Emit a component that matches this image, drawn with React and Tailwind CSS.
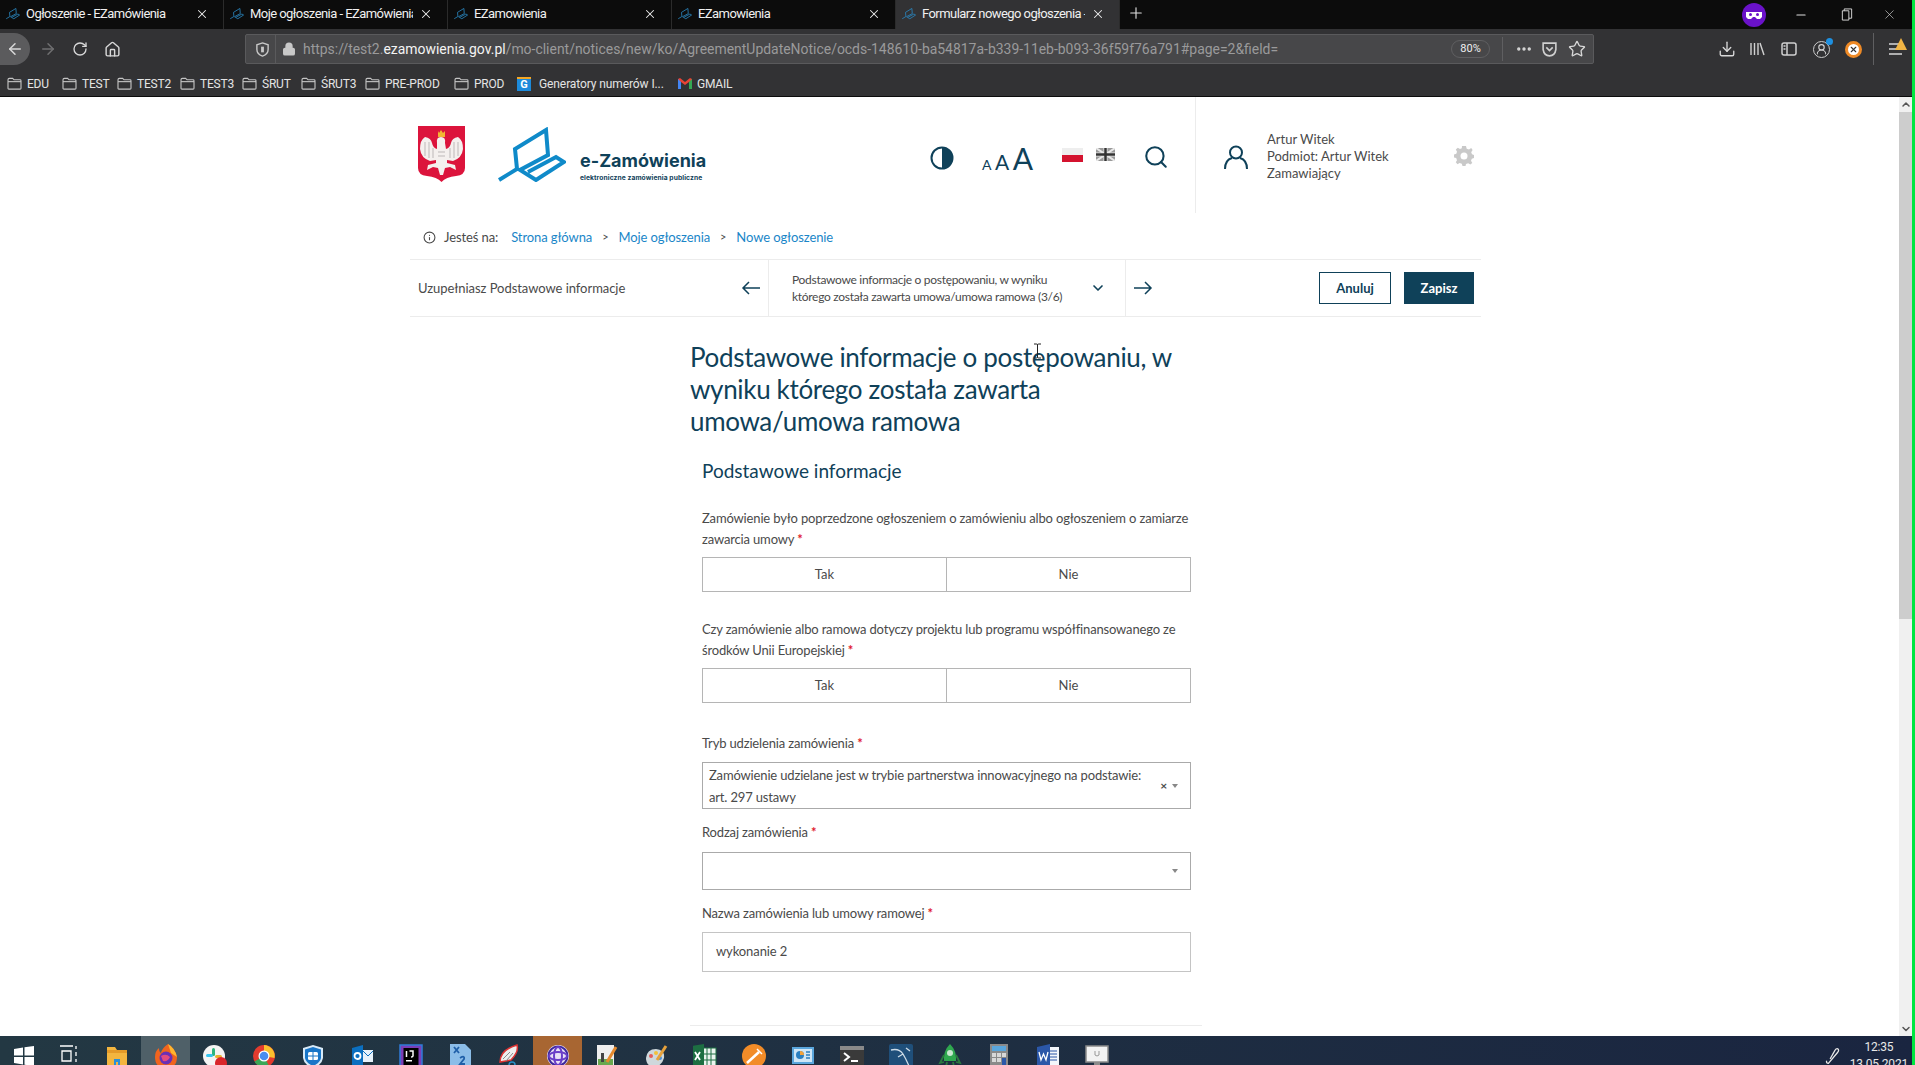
import {
    ArrowLeft, ArrowRight, RotateCw, Home, Lock, Star, Download, Minus, Plus, X, Search,
    UserRound, ChevronDown, ChevronUp, Info, Ellipsis
} from "lucide-react";

const tabs = [
    {title: "Ogłoszenie - EZamówienia"},
    {title: "Moje ogłoszenia - EZamówienia"},
    {title: "EZamowienia"},
    {title: "EZamowienia"},
    {title: "Formularz nowego ogłoszenia -", active: true},
];

const bookmarks = [
    {name: "EDU", w: "w-[55px]"},
    {name: "TEST", w: "w-[55px]"},
    {name: "TEST2", w: "w-[63px]"},
    {name: "TEST3", w: "w-[62px]"},
    {name: "ŚRUT", w: "w-[59px]"},
    {name: "ŚRUT3", w: "w-[64px]"},
    {name: "PRE-PROD", w: "w-[89px]"},
    {name: "PROD", w: "w-[63px]"},
];

const LogoMark = ({className, color = "#0f8ac9"}) => (
    <svg viewBox="0 0 68 55" className={className} fill="none" stroke={color} strokeWidth="4" strokeLinejoin="miter">
        <path d="M1 53 L19 42 L17 22 L48 3 L50 28 L22 43 L38 53 L66 35 L58 30 L30 45" />
    </svg>
);

const Emblem = () => (
    <svg viewBox="0 0 47 56" className="w-[47px] h-[56px]">
        <path d="M0 0 H47 V42 Q47 49 38 50 Q28 51 23.500 56 Q19 51 9 50 Q0 49 0 42 Z" fill="#dc143c" />
        <path d="M23 11 Q18 11 19 17 L19 23 Q15 22 14 17 Q13 12 7 11 Q2 14 2 23 Q3 32 12 35 L18 34 L18 37 L10 39 L9 44 L15 41 L20 42 L22 49 L25 49 L27 42 L32 41 L38 44 L37 39 L29 37 L29 34 L35 35 Q44 32 45 23 Q45 14 40 11 Q34 12 33 17 Q32 22 28 23 L27 17 Q28 11 23 11 Z" fill="#f4f0ee" />
        <path d="M20 5 L21 7 L23 4 L25 7 L27 5 L27 11 L20 11 Z" fill="#f2b632" />
        <path d="M7 16 V30 M11 16 V32 M15 22 V32 M40 16 V30 M36 16 V32 M32 22 V32 M20 26 H27 M20 30 H27" stroke="#bdb8b8" strokeWidth="1" />
    </svg>
);

const FolderIcon = () => (
    <svg viewBox="0 0 16 14" className="w-[15px] h-[13px]" fill="none" stroke="#c4c4c4" strokeWidth="1.200">
        <path d="M1 3 Q1 1.500 2.500 1.500 H6 L7.500 3 H14 Q15 3 15 4 V12 Q15 13 14 13 H2 Q1 13 1 12 Z" />
        <path d="M1 5 H15" />
    </svg>
);

const LineArrow = ({dir}) => (
    <svg viewBox="0 0 20 14" className="h-[14px] w-[20px]" fill="none" stroke="#0f4159" strokeWidth="1.500">
        {dir === "left" ? <path d="M19 7 H2 M8 1 L2 7 L8 13" /> : <path d="M1 7 H18 M12 1 L18 7 L12 13" />}
    </svg>
);

const taskIcons = [
    <svg viewBox="0 0 24 24"><path d="M2 5 L11 3.500 V11.500 H2 Z M12.500 3.300 L22 2 V11.500 H12.500 Z M2 13 H11 V20.500 L2 19 Z M12.500 13 H22 V22 L12.500 20.700 Z" fill="#fff" /></svg>,
    <svg viewBox="0 0 24 24" fill="none" stroke="#fff" strokeWidth="1.300"><path d="M4 2 H17 M4 22 H17 M6 7 H15 V17 H6 Z M20 2 V5 M20 8 V12 M20 15 V18" /></svg>,
    <svg viewBox="0 0 24 24"><path d="M2 3 H10 L12 6 H22 V22 H2 Z" fill="#f3b53f" /><path d="M2 6 H22 V9 H2 Z" fill="#e49a28" /><path d="M9 15 H15 V22 H13 V18 H11 V22 H9 Z" fill="#2b8fd6" /></svg>,
    <svg viewBox="0 0 24 24"><path d="M14 0 Q21 4 23 13 Q23 24 12 24 Q1 24 1 13 Q1 7 5 4 Q5 8 7 9 Q8 4 14 0 Z" fill="#f0641e" /><path d="M14 0 Q21 4 23 13 L17 9 Z" fill="#ffb52e" /><circle cx="12" cy="14" r="6.500" fill="#6a2fb5" /><path d="M7 12 Q12 9 16 13 Q14 18 9 17 Z" fill="#e24a7e" /></svg>,
    <svg viewBox="0 0 24 24"><circle cx="11" cy="12" r="11" fill="#f4f4f4" /><rect x="9" y="4" width="3" height="8" rx="1.500" fill="#2eb67d" /><rect x="3" y="10" width="7" height="3" rx="1.500" fill="#36c5f0" /><rect x="12" y="11" width="7" height="3" rx="1.500" fill="#ecb22e" /><circle cx="18" cy="19" r="6" fill="#d9252a" /></svg>,
    <svg viewBox="0 0 24 24"><circle cx="12" cy="12" r="11" fill="#e33b2e" /><path d="M12 12 L2.500 17.500 A11 11 0 0 0 17 22 Z" fill="#3aa757" /><path d="M12 1 A11 11 0 0 1 22.500 14 L12 12 Z" fill="#fbc02d" /><circle cx="12" cy="12" r="5.500" fill="#fff" /><circle cx="12" cy="12" r="4.300" fill="#4a8df0" /></svg>,
    <svg viewBox="0 0 24 24"><path d="M12 1 L22 4 V14 Q21 21 12 24 Q3 21 2 14 V4 Z" fill="#d8eaf7" /><path d="M12 3 L20 5.500 V14 Q19 19 12 22 Q5 19 4 14 V5.500 Z" fill="#1976c8" /><rect x="7" y="8" width="10" height="8" rx="1.500" fill="#fff" /><path d="M12 8 V16 M7 12 H17" stroke="#1976c8" /></svg>,
    <svg viewBox="0 0 24 24"><path d="M2 4 L13 1 V24 L2 21 Z" fill="#0b6fc0" /><rect x="13" y="6" width="10" height="12" fill="#e8f2fb" /><path d="M13 7 L18 12 L23 7" stroke="#0b6fc0" fill="none" /><circle cx="7.500" cy="12" r="3" fill="none" stroke="#fff" strokeWidth="1.800" /></svg>,
    <svg viewBox="0 0 24 24"><rect x="1" y="1" width="22" height="23" fill="#7b3db5" /><rect x="1" y="1" width="22" height="23" fill="none" stroke="#2f7bd8" strokeWidth="1.500" /><rect x="4.500" y="4" width="15" height="17" fill="#000" /><rect x="7" y="16" width="6" height="1.500" fill="#fff" /><path d="M7.500 7 V13 M10.500 7 H14 V12 Q14 13 12 13" stroke="#fff" strokeWidth="1.500" fill="none" /></svg>,
    <svg viewBox="0 0 24 24"><path d="M2 0 H17 L23 6 V24 H2 Z" fill="#8bbde8" /><path d="M6 3 L11 9 M11 3 L6 9 M12 14 Q17 11 16 15 L12 20 H17" stroke="#1f5fa8" strokeWidth="1.800" fill="none" /></svg>,
    <svg viewBox="0 0 24 24"><path d="M3 18 Q3 6 20 1 Q22 8 14 16 Z" fill="#eee" stroke="#d33" strokeWidth="1.500" /><path d="M6 15 L13 8 M9 17 L16 9" stroke="#888" /><circle cx="15" cy="21" r="3" fill="none" stroke="#2a8fc7" strokeWidth="1.500" /></svg>,
    <svg viewBox="0 0 24 24"><circle cx="12" cy="12" r="11" fill="#e8e0f5" /><circle cx="12" cy="12" r="9.500" fill="none" stroke="#3f2a9c" strokeWidth="2" /><ellipse cx="12" cy="12" rx="4" ry="9" fill="none" stroke="#6a3fc8" strokeWidth="2" /><ellipse cx="12" cy="12" rx="9" ry="4" fill="none" stroke="#6a3fc8" strokeWidth="2" /></svg>,
    <svg viewBox="0 0 24 24"><rect x="2" y="1" width="17" height="23" fill="#eee" /><rect x="3" y="15" width="15" height="9" fill="#6aa84f" /><rect x="6" y="9" width="3" height="9" fill="#444" /><path d="M12 18 L21 3" stroke="#e58a2e" strokeWidth="3" /></svg>,
    <svg viewBox="0 0 24 24"><path d="M2 14 Q3 5 12 5 Q21 6 20 14 Q18 22 10 23 Q2 22 2 14 Z" fill="#cfd8dc" /><circle cx="7" cy="12" r="2" fill="#e35d5b" /><circle cx="12" cy="9" r="2" fill="#f3c13a" /><circle cx="16" cy="14" r="2" fill="#4a90d9" /><path d="M13 16 L22 2" stroke="#e6a13c" strokeWidth="3" /></svg>,
    <svg viewBox="0 0 24 24"><rect x="10" y="4" width="13" height="18" fill="#eaf4ee" stroke="#1d6f42" /><path d="M14 4 V22 M18 4 V22 M10 10 H23 M10 16 H23" stroke="#1d6f42" /><path d="M-1 2 L11 0 V24 L-1 22 Z" fill="#1d6f42" /><path d="M2 8 L7 16 M7 8 L2 16" stroke="#fff" strokeWidth="1.800" /></svg>,
    <svg viewBox="0 0 24 24"><circle cx="12" cy="12" r="12" fill="#f28c28" /><path d="M5 19 L17 8" stroke="#fff" strokeWidth="2.500" /><path d="M15 5 L20 10" stroke="#fff" strokeWidth="1.500" /></svg>,
    <svg viewBox="0 0 24 24"><rect x="1" y="3" width="22" height="17" fill="#5aa6dc" /><rect x="3" y="5" width="18" height="13" fill="#cfe6f6" /><circle cx="9" cy="11" r="4" fill="#2b7fc0" /><path d="M9 7 A4 4 0 0 1 13 11 H9 Z" fill="#f3a23a" /><path d="M15 8 H19 M15 11 H19 M15 14 H19" stroke="#2b7fc0" strokeWidth="1.500" /></svg>,
    <svg viewBox="0 0 24 24"><rect x="0" y="2" width="24" height="20" fill="#3a3a3a" /><rect x="0" y="2" width="24" height="4" fill="#8a8a8a" /><path d="M4 9 L9 13 L4 17" stroke="#fff" strokeWidth="2" fill="none" /><path d="M11 17 H18" stroke="#fff" strokeWidth="2" /></svg>,
    <svg viewBox="0 0 24 24"><rect x="0" y="0" width="24" height="24" rx="2" fill="#1f4f7a" /><path d="M2 6 Q10 4 14 10 Q17 15 20 22 M14 10 L9 13 M17 4 L21 7" stroke="#cfdde8" strokeWidth="1.300" fill="none" /></svg>,
    <svg viewBox="0 0 24 24"><path d="M12 0 Q19 7 18 17 H6 Q5 7 12 0 Z" fill="#2fa84f" /><circle cx="12" cy="9" r="3" fill="#c9e8d0" /><path d="M6 11 L2 19 L6 18 M18 11 L22 19 L18 18 M9 18 L8 23 M15 18 L16 23" stroke="#2a7a3f" strokeWidth="1.800" fill="none" /></svg>,
    <svg viewBox="0 0 24 24"><rect x="3" y="0" width="18" height="24" fill="#8a8a8a" /><rect x="5" y="2" width="14" height="5" fill="#5aa6dc" /><path d="M5 9 H9 V13 H5 Z M10 9 H14 V13 H10 Z M15 9 H19 V13 H15 Z M5 14 H9 V18 H5 Z M10 14 H14 V18 H10 Z" fill="#d8d8d8" /><rect x="15" y="14" width="4" height="9" fill="#2b57a8" /></svg>,
    <svg viewBox="0 0 24 24"><rect x="9" y="3" width="14" height="18" fill="#f3f6fb" /><path d="M14 7 H21 M14 10 H21 M14 13 H21 M14 16 H21" stroke="#2b57a8" /><path d="M1 3 L14 0 V24 L1 21 Z" fill="#2b57a8" /><path d="M3 8 L5 16 L7.500 10 L10 16 L12 8" stroke="#fff" strokeWidth="1.300" fill="none" /></svg>,
    <svg viewBox="0 0 24 24"><rect x="1" y="2" width="22" height="16" fill="#f2f2f2" stroke="#8a8a8a" strokeWidth="1.500" /><path d="M10 7 V11 Q12 13 14 11 V7" stroke="#999" fill="none" /><rect x="9" y="18" width="6" height="3" fill="#8a8a8a" /><rect x="6" y="21" width="12" height="3" fill="#8a8a8a" /></svg>,
];

const Tab = ({title, active}) => (
    <div className={`relative flex w-[224px] shrink-0 items-center pb-[2px] pl-[6px] pr-[14px] h-full border-r border-[#2b2b2b] ${active ? "bg-[#323234]" : ""}`}>
        <LogoMark className="w-[14px] h-[13px] mr-[6px] shrink-0" color="#2a86c0" />
        <span className="flex-1 overflow-hidden whitespace-nowrap text-[13px] text-[#f0f0f0] tracking-[-0.55px]">{title}</span>
        <X className="ml-[6px] shrink-0 text-[#eeeeee]" size={14} strokeWidth={1.800} />
    </div>
);

const BrowserChrome = () => (
    <div className="shrink-0 font-[Roboto,sans-serif]">
        <div className="flex h-[29px] items-center bg-[#0c0c0c]">
            {tabs.map(tab => <Tab key={tab.title} title={tab.title} active={tab.active} />)}
            <Plus className="ml-[7px] mb-[3px] text-[#e0e0e0]" size={18} strokeWidth={1.500} />
            <div className="ml-auto flex items-center">
                <svg viewBox="0 0 24 24" className="h-[24px] w-[24px]">
                    <circle cx="12" cy="12" r="12" fill="#6a12c9" />
                    <path d="M4 9 H20 V14 L18 16 H15 L13 14 H11 L9 16 H6 L4 14 Z" fill="#ffffff" />
                    <circle cx="8.500" cy="11.500" r="1.500" fill="#6a12c9" />
                    <circle cx="15.500" cy="11.500" r="1.500" fill="#6a12c9" />
                </svg>
                <Minus className="ml-[28px] text-[#dddddd]" size={14} />
                <svg viewBox="0 0 12 14" className="ml-[33px] h-[13px] w-[12px]" fill="none" stroke="#dddddd"><path d="M1 3 H8 V13 H1 Z M3 3 V1 H11 V11 H8" /></svg>
                <X className="ml-[29px] mr-[15px] text-[#dddddd]" size={15} strokeWidth={1} />
            </div>
        </div>
        <div className="flex h-[39px] items-center bg-[#323234] pt-[1px] text-[#d8d8d8]">
            <div className="flex h-[32px] w-[30px] items-center justify-center rounded-r-full bg-[#5b5b5d]">
                <ArrowLeft size={18} strokeWidth={2} />
            </div>
            <ArrowRight className="ml-[9px] text-[#6f6f70]" size={18} strokeWidth={2} />
            <RotateCw className="ml-[15px]" size={16} strokeWidth={2} />
            <Home className="ml-[16px]" size={17} strokeWidth={2} />
            <div className="ml-[124px] flex h-[30px] w-[1349px] items-center rounded-[2px] border border-[#5a5a5c] bg-[#474749] pl-[9px]">
                <svg viewBox="0 0 16 16" className="h-[15px] w-[15px]" fill="none" stroke="#c8c8c8" strokeWidth="1.500"><path d="M8 1 L14 3 V8 Q14 13 8 15 Q2 13 2 8 V3 Z" /><path d="M8 5 V11" strokeWidth="3" /></svg>
                <div className="ml-[5px] h-[28px] w-px bg-[#5a5a5c]" />
                <Lock className="ml-[6px] fill-[#c8c8c8] text-[#c8c8c8]" size={14} strokeWidth={2.500} />
                <div className="ml-[7px] w-[981px] shrink-0 overflow-hidden whitespace-nowrap text-[13.950px] text-[#9a9a9b]">
                    https://test2.<span className="text-[#f4f4f4]">ezamowienia.gov.pl</span>/mo-client/notices/new/ko/AgreementUpdateNotice/ocds-148610-ba54817a-b339-11eb-b093-36f59f76a791#page=2&field=
                </div>
                <div className="ml-[167px] flex h-[18px] w-[39px] items-center justify-center rounded-full border border-[#5f5f61] text-[11px] text-[#eeeeee]">80%</div>
                <div className="ml-[12px] h-[24px] w-px bg-[#5f5f61]" />
                <Ellipsis className="ml-[12px]" size={18} strokeWidth={2.500} />
                <svg viewBox="0 0 16 16" className="ml-[8px] h-[17px] w-[17px]" fill="none" stroke="#d0d0d0" strokeWidth="1.500"><path d="M2 2 H14 V8 Q13 14 8 14 Q3 14 2 8 Z" /><path d="M5 6 L8 9 L11 6" /></svg>
                <Star className="ml-[10px]" size={18} strokeWidth={1.800} />
            </div>
            <Download className="ml-[124px]" size={18} strokeWidth={1.800} />
            <svg viewBox="0 0 16 16" className="ml-[13px] h-[16px] w-[16px]" fill="none" stroke="#d0d0d0" strokeWidth="1.400"><path d="M2 2 V14 M5.500 2 V14 M9 2 V14 M11 2 L15 14" /></svg>
            <svg viewBox="0 0 16 16" className="ml-[16px] h-[16px] w-[16px]" fill="none" stroke="#d0d0d0" strokeWidth="1.500"><rect x="1" y="2" width="14" height="12" rx="2" /><path d="M6 2 V14" /><path d="M2.500 5 H4.500 M2.500 8 H4.500" /></svg>
            <div className="relative ml-[16px]">
                <UserRound className="rounded-full border border-[#cccccc] p-[1px]" size={17} strokeWidth={2} />
                <div className="absolute -right-[3px] -top-[3px] h-[7px] w-[7px] rounded-full bg-[#1e90e0]" />
            </div>
            <div className="ml-[15px] flex h-[17px] w-[17px] items-center justify-center rounded-full border-[3px] border-[#ee8a26] bg-white">
                <X className="text-[#333333]" size={9} strokeWidth={3} />
            </div>
            <div className="ml-[11px] h-[32px] w-px bg-[#5f5f61]" />
            <div className="relative ml-[15px]">
                <svg viewBox="0 0 14 14" className="h-[14px] w-[14px]" stroke="#d8d8d8" strokeWidth="1.600"><path d="M0 2 H13 M0 7 H13 M0 12 H13" /></svg>
                <svg viewBox="0 0 12 12" className="absolute -right-[4px] -top-[4px] h-[12px] w-[12px]"><path d="M6 0 L12 12 H0 Z" fill="#f2b544" /></svg>
            </div>
        </div>
        <div className="flex h-[29px] items-center border-b border-[#0c0c0c] bg-[#323234] pt-[3px] pl-[7px] text-[12px] tracking-[-0.2px] text-[#e4e4e4]">
            {bookmarks.map(b => (
                <div className={`flex items-center gap-[5px] ${b.w}`} key={b.name}><FolderIcon /> {b.name}</div>
            ))}
            <div className="flex h-[14px] w-[14px] items-center justify-center bg-[#1c8adb] text-[11px] font-bold leading-none text-white border-t-2 border-[#f5a623]">G</div>
            <span className="ml-[8px] w-[139px] tracking-[-0.1px]">Generatory numerów I...</span>
            <svg viewBox="0 0 14 11" className="h-[11px] w-[14px]"><path d="M0 1 V11 H3 V4 L7 7 L11 4 V11 H14 V1 L12 0 L7 4 L2 0 Z" fill="#ea4335" /><path d="M0 1 V11 H3 V4 Z" fill="#4285f4" /><path d="M14 1 V11 H11 V4 Z" fill="#34a853" /></svg>
            <span className="ml-[5px]">GMAIL</span>
        </div>
    </div>
);

const Header = () => (
    <div className="flex h-[116px]">
        <div className="flex w-[785px] items-start pl-[8px]">
            <div className="mt-[29px]"><Emblem /></div>
            <LogoMark className="ml-[33px] mt-[30px] h-[55px] w-[68px]" />
            <div className="ml-[14px] mt-[52px] flex flex-col text-[#0f4159]">
                <span className="font-[Inter,sans-serif] text-[18px] font-bold leading-[24px]">e-Zamówienia</span>
                <span className="font-[Inter,sans-serif] text-[6.700px] font-bold leading-[9px] mt-[1px] tracking-[0.1px]">elektroniczne zamówienia publiczne</span>
            </div>
            <div className="ml-auto mr-[26px] mt-[46px] flex items-center text-[#0f4159]">
                <svg viewBox="0 0 24 24" className="h-[24px] w-[24px]"><circle cx="12" cy="12" r="10.500" fill="none" stroke="#0f4159" strokeWidth="2" /><path d="M12 1.500 A10.500 10.500 0 0 1 12 22.500 Z" fill="#0f4159" /></svg>
                <div className="ml-[28px] flex w-[51px] items-baseline justify-between leading-none">
                    <span className="text-[14px]">A</span><span className="text-[21px]">A</span><span className="text-[30px]">A</span>
                </div>
                <div className="ml-[29px] mb-[6px] flex h-[14px] w-[21px] flex-col">
                    <div className="flex-1 bg-[#eeeeee]" />
                    <div className="flex-1 bg-[#d4132f]" />
                </div>
                <svg viewBox="0 0 19 13" className="ml-[13px] mb-[7px] h-[13px] w-[19px]">
                    <rect width="19" height="13" fill="#9a9a9a" />
                    <path d="M0 0 L19 13 M19 0 L0 13" stroke="#e8e8e8" strokeWidth="2" />
                    <path d="M9.500 0 V13 M0 6.500 H19" stroke="#e8e8e8" strokeWidth="4" />
                    <path d="M9.500 0 V13 M0 6.500 H19" stroke="#333333" strokeWidth="2.500" />
                </svg>
                <Search className="ml-[28px] mb-[2px]" size={26} strokeWidth={1.900} />
            </div>
        </div>
        <div className="flex flex-1 items-start border-l border-[#ececec] pl-[28px]">
            <svg viewBox="0 0 24 24" className="mt-[48px] h-[24px] w-[24px]" fill="none" stroke="#0f4159" strokeWidth="2">
                <circle cx="12" cy="7.500" r="6" />
                <path d="M1 24 Q1 15 8 13 M23 24 Q23 15 16 13" />
            </svg>
            <div className="ml-[19px] mt-[34px] text-[13px] leading-[17px] text-[#4a4a4a]">
                <div>Artur Witek</div>
                <div>Podmiot: Artur Witek</div>
                <div>Zamawiający</div>
            </div>
            <svg viewBox="0 0 20 20" className="ml-auto mr-[7px] mt-[49px] h-[20px] w-[20px]">
                <path d="M8 0 H12 L12.700 2.700 L15 3.600 L17.200 2 L18.600 4 L17.200 6.200 L18 8.300 L20 9 V12 L17.800 12.700 L17 14.800 L18.300 17 L16.300 18.500 L14.200 17.300 L12 18 L11.500 20 H8.500 L7.800 17.800 L5.600 17 L3.500 18.300 L1.800 16.300 L3 14.200 L2.200 12 L0 11.500 V8.500 L2.300 7.800 L3 5.700 L1.800 3.500 L3.800 1.800 L6 3 L7.800 2.300 Z" fill="#c9c9c9" />
                <circle cx="10" cy="10" r="3.500" fill="#ffffff" />
            </svg>
        </div>
    </div>
);

const Breadcrumb = () => (
    <div className="flex h-[46px] items-center pt-[3px] pl-[13px] text-[13px] tracking-[-0.1px] text-[#4a4a4a]">
        <Info size={13} strokeWidth={2} />
        <span className="ml-[8px]">Jesteś na:</span>
        <span className="ml-[13px] text-[#1a86c8]">Strona główna</span>
        <span className="mx-[10px] text-[11px]">&gt;</span>
        <span className="text-[#1a86c8]">Moje ogłoszenia</span>
        <span className="mx-[10px] text-[11px]">&gt;</span>
        <span className="text-[#1a86c8]">Nowe ogłoszenie</span>
    </div>
);

const NavBar = () => (
    <div className="flex h-[58px] border-y border-[#ececec] text-[#4a4a4a]">
        <div className="flex w-[358px] items-center pl-[8px] pr-[7px] text-[13px] tracking-[-0.05px]">
            <span className="pt-[1px]">Uzupełniasz Podstawowe informacje</span>
            <div className="ml-auto flex"><LineArrow dir="left" /></div>
        </div>
        <div className="flex w-[358px] items-center border-x border-[#ececec] pl-[23px] pr-[19px] text-[12px] leading-[17px] tracking-[-0.3px]">
            <div className="w-[275px]">Podstawowe informacje o postępowaniu, w wyniku którego została zawarta umowa/umowa ramowa (3/6)</div>
            <ChevronDown className="ml-auto text-[#0f4159]" size={16} strokeWidth={2.500} />
        </div>
        <div className="flex flex-1 items-center pl-[7px] pr-[7px]">
            <LineArrow dir="right" />
            <button className="ml-auto h-[32px] w-[72px] border border-[#0f4159] pt-[1px] text-[13px] font-bold text-[#0f4159]">Anuluj</button>
            <button className="ml-[13px] h-[32px] w-[70px] bg-[#0f4159] pt-[1px] text-[13px] font-bold text-white">Zapisz</button>
        </div>
    </div>
);

const Label = ({text}) => (
    <div className="text-[13px] leading-[21px] tracking-[-0.16px] text-[#4a4a4a]">
        {text} <span className="font-bold text-[#e0182d]">*</span>
    </div>
);

const YesNo = () => (
    <div className="mt-[7px] flex h-[35px] border border-[#b5b5b5] text-[13px] text-[#4a4a4a]">
        <div className="flex flex-1 items-center justify-center border-r border-[#b5b5b5]">Tak</div>
        <div className="flex flex-1 items-center justify-center">Nie</div>
    </div>
);

const Caret = () => <div className="h-0 w-0 border-x-[3px] border-t-[4px] border-x-transparent border-t-[#888888]" />;

const Form = () => (
    <div className="ml-[280px] w-[512px]">
        <h1 className="mt-[24px] text-[26px] font-normal leading-[32px] tracking-[-0.33px] text-[#0f4159]">
            Podstawowe informacje o postępowaniu, w wyniku którego została zawarta umowa/umowa ramowa
        </h1>
        <div className="ml-[12px] w-[489px]">
            <h2 className="mt-[21px] text-[19px] leading-[26px] text-[#0f4159]">Podstawowe informacje</h2>
            <div className="mt-[24px]">
                <Label text="Zamówienie było poprzedzone ogłoszeniem o zamówieniu albo ogłoszeniem o zamiarze zawarcia umowy" />
                <YesNo />
            </div>
            <div className="mt-[27px]">
                <Label text="Czy zamówienie albo ramowa dotyczy projektu lub programu współfinansowanego ze środków Unii Europejskiej" />
                <YesNo />
            </div>
            <div className="mt-[30px]"><Label text="Tryb udzielenia zamówienia" /></div>
            <div className="mt-[8px] flex h-[47px] items-center border border-[#aaaaaa] pl-[6px] pr-[12px] text-[13px] leading-[22px] tracking-[-0.16px] text-[#4a4a4a]">
                <div className="w-[445px]">Zamówienie udzielane jest w trybie partnerstwa innowacyjnego na podstawie: art. 297 ustawy</div>
                <span className="ml-auto text-[12px] font-bold leading-none">×</span>
                <div className="ml-[5px]"><Caret /></div>
            </div>
            <div className="mt-[13px]"><Label text="Rodzaj zamówienia" /></div>
            <div className="mt-[9px] flex h-[38px] items-center justify-end border border-[#aaaaaa] pr-[12px]"><Caret /></div>
            <div className="mt-[13px]"><Label text="Nazwa zamówienia lub umowy ramowej" /></div>
            <div className="mt-[8px] flex h-[40px] items-center border border-[#c4c4c4] pl-[13px] text-[13px] tracking-[-0.1px] text-[#4a4a4a]">wykonanie 2</div>
        </div>
        <div className="mt-[53px] h-px bg-[#ececec]" />
    </div>
);

const Scrollbar = () => (
    <div className="flex w-[13px] shrink-0 flex-col items-center bg-[#f0f0f0]">
        <ChevronUp className="h-[15px] shrink-0 text-[#555555]" size={12} strokeWidth={3} />
        <div className="h-[507px] w-full bg-[#cdcdcd]" />
        <ChevronDown className="mt-auto mb-[1px] text-[#555555]" size={12} strokeWidth={3} />
    </div>
);

const Taskbar = () => (
    <div className="relative flex h-[29px] shrink-0 overflow-hidden bg-linear-to-r from-[#233843] to-[#1a2540] font-[Roboto,sans-serif]">
        <div className="flex w-[43px] shrink-0 justify-center pl-[5px]"><div className="mt-[8px] h-[24px] w-[24px] shrink-0">{taskIcons[0]}</div></div>
        {taskIcons.slice(1).map((icon, i) => (
            <div className={`flex w-[49px] shrink-0 justify-center ${i === 2 ? "bg-[#4f6068]" : i === 10 ? "bg-[#a86632]" : ""}`} key={i}>
                <div className="mt-[8px] h-[24px] w-[24px] shrink-0">{icon}</div>
            </div>
        ))}
        <div className="absolute right-0 top-0 flex">
            <svg viewBox="0 0 20 20" className="mr-[8px] mt-[12px] h-[17px] w-[17px]" fill="none" stroke="#e8e8e8" strokeWidth="1.500"><path d="M2 15 Q1 18 4 18 L15 5 Q17 2 15 1 Q13 0 11 4 L6 13" /></svg>
            <div className="mr-[4px] flex flex-col items-center text-[12px] leading-[17px] tracking-[-0.2px] text-[#e8e8e8]">
                <span className="mt-[3px]">12:35</span>
                <span>13.05.2021</span>
            </div>
        </div>
    </div>
);

const App = () => (
    <div className="flex h-[1065px] w-[1915px] overflow-hidden bg-white font-[Lato,sans-serif]">
        <div className="flex w-[1912px] flex-col">
            <BrowserChrome />
            <div className="flex min-h-0 flex-1">
                <div className="relative flex-1 overflow-hidden">
                    <div className="ml-[410px] w-[1071px]">
                        <Header />
                        <Breadcrumb />
                        <NavBar />
                        <Form />
                    </div>
                    <svg viewBox="0 0 9 16" className="absolute left-[1033px] top-[246px] h-[16px] w-[9px]" fill="none" stroke="#222222"><path d="M1 1 H3.500 Q4.500 1 4.500 2 V14 Q4.500 15 3.500 15 H1 M8 1 H5.500 Q4.500 1 4.500 2 M8 15 H5.500 Q4.500 15 4.500 14" /></svg>
                </div>
                <Scrollbar />
            </div>
            <Taskbar />
        </div>
        <div className="flex-1 bg-[#00e640]" />
    </div>
);

export default App;
